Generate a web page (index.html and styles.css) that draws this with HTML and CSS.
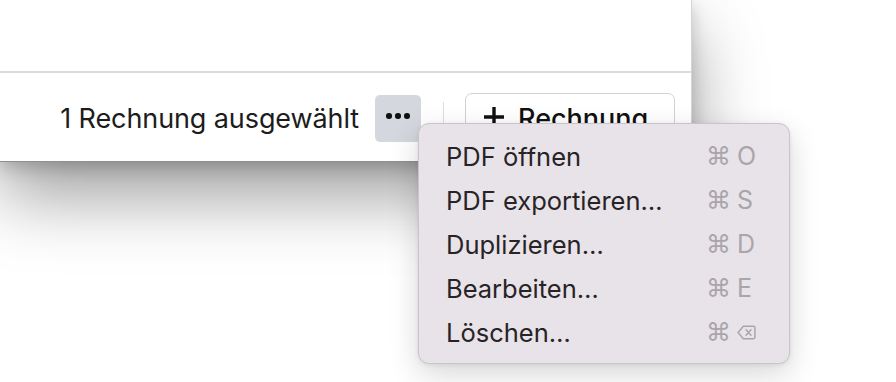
FILE: index.html
```html
<!DOCTYPE html>
<html lang="de">
<head>
    <meta charset="UTF-8">
    <title>Rechnungen</title>
    <link rel="stylesheet" href="styles.css">
</head>
<body>
    <div class="window">
        <div class="list-area"></div>
        <div class="footer">
            <span class="selection">1 Rechnung ausgewählt</span>
            <button class="more-btn" aria-label="Mehr">
                <span class="dot"></span><span class="dot"></span><span class="dot"></span>
            </button>
            <span class="separator"></span>
            <button class="add-btn">
                <svg class="plus" width="22" height="22" viewBox="0 0 22 22">
                    <path d="M11 1 V21 M1 11 H21" stroke="#111" stroke-width="3.4"/>
                </svg>
                Rechnung
            </button>
        </div>
    </div>

    <ul class="menu">
        <li><span class="label">PDF öffnen</span><span class="shortcut"><span class="cmd">⌘</span><span class="key">O</span></span></li>
        <li><span class="label">PDF exportieren…</span><span class="shortcut"><span class="cmd">⌘</span><span class="key">S</span></span></li>
        <li><span class="label">Duplizieren…</span><span class="shortcut"><span class="cmd">⌘</span><span class="key">D</span></span></li>
        <li><span class="label">Bearbeiten…</span><span class="shortcut"><span class="cmd">⌘</span><span class="key">E</span></span></li>
        <li><span class="label">Löschen…</span><span class="shortcut"><span class="cmd">⌘</span><span class="key">
            <svg width="21" height="17" viewBox="0 0 21 17">
                <path d="M7 1.5 H18 a1.8 1.8 0 0 1 1.8 1.8 V13.7 a1.8 1.8 0 0 1 -1.8 1.8 H7 L1.2 8.5 Z" fill="none" stroke="#a9a4a9" stroke-width="1.6" stroke-linejoin="round"/>
                <path d="M10 5.5 L15.5 11.5 M15.5 5.5 L10 11.5" stroke="#a9a4a9" stroke-width="1.6" stroke-linecap="round"/>
            </svg>
        </span></span></li>
    </ul>
</body>
</html>
```

FILE: styles.css
```css
body {
    margin: 0;
    background: #ffffff;
    font-family: Inter, "Noto Sans", sans-serif;
    height: 382px;
    overflow: hidden;
}
.window {
    width: 692px;
    height: 162px;
    background: #ffffff;
    border-right: 1px solid #d4d4d4;
    border-bottom: 1px solid #8f8f8f;
    box-sizing: border-box;
    box-shadow: 0 34px 70px rgba(0, 0, 0, 0.38), 0 6px 16px rgba(0, 0, 0, 0.18);
}
.list-area {
    height: 73px;
    border-bottom: 2px solid #dcdcdc;
    box-sizing: border-box;
}
.footer {
    height: 88px;
    display: flex;
    align-items: center;
    justify-content: flex-end;
    padding-right: 16px;
}
.selection {
    font-size: 27px;
    color: #1c1c1c;
    letter-spacing: -0.1px;
    margin-right: 14px;
    margin-top: 2px;
}
.more-btn {
    width: 46px;
    height: 47px;
    border: none;
    border-radius: 5px;
    background: #d4d7dd;
    display: flex;
    align-items: center;
    justify-content: center;
    gap: 3.5px;
    padding: 0;
    margin-top: 2px;
    margin-left: 2px;
}
.dot {
    width: 5.5px;
    height: 5.5px;
    border-radius: 50%;
    background: #111111;
    margin-top: -4px;
}
.separator {
    width: 1px;
    height: 30px;
    background: #dedede;
    margin: 0 21px 0 22px;
}
.add-btn {
    width: 210px;
    height: 50px;
    border: 1px solid #d2d2d2;
    border-radius: 7px;
    background: #ffffff;
    font-family: inherit;
    font-size: 27px;
    font-weight: 500;
    color: #111111;
    display: flex;
    align-items: center;
    justify-content: flex-start;
    gap: 13px;
    padding: 0 0 0 17px;
    margin-top: 2px;
}
.plus {
    margin-top: -2px;
}
.menu {
    position: absolute;
    left: 418px;
    top: 123px;
    width: 372px;
    height: 241px;
    box-sizing: border-box;
    margin: 0;
    padding: 10px 33px 11px 27px;
    list-style: none;
    background: #e8e3e8;
    border: 1px solid #c9c4c9;
    border-radius: 11px;
    box-shadow: 0 10px 30px rgba(0, 0, 0, 0.16), 0 1px 4px rgba(0, 0, 0, 0.08);
}
.menu li {
    height: 44px;
    display: flex;
    align-items: center;
    justify-content: space-between;
    font-size: 25.5px;
    color: #272326;
}
.shortcut {
    display: flex;
    align-items: center;
    color: #aaa5aa;
    font-size: 25px;
}
.cmd {
    font-family: "DejaVu Sans", sans-serif;
    font-size: 25px;
    width: 31px;
}
.key {
    width: 19px;
    display: flex;
    align-items: center;
}
```
